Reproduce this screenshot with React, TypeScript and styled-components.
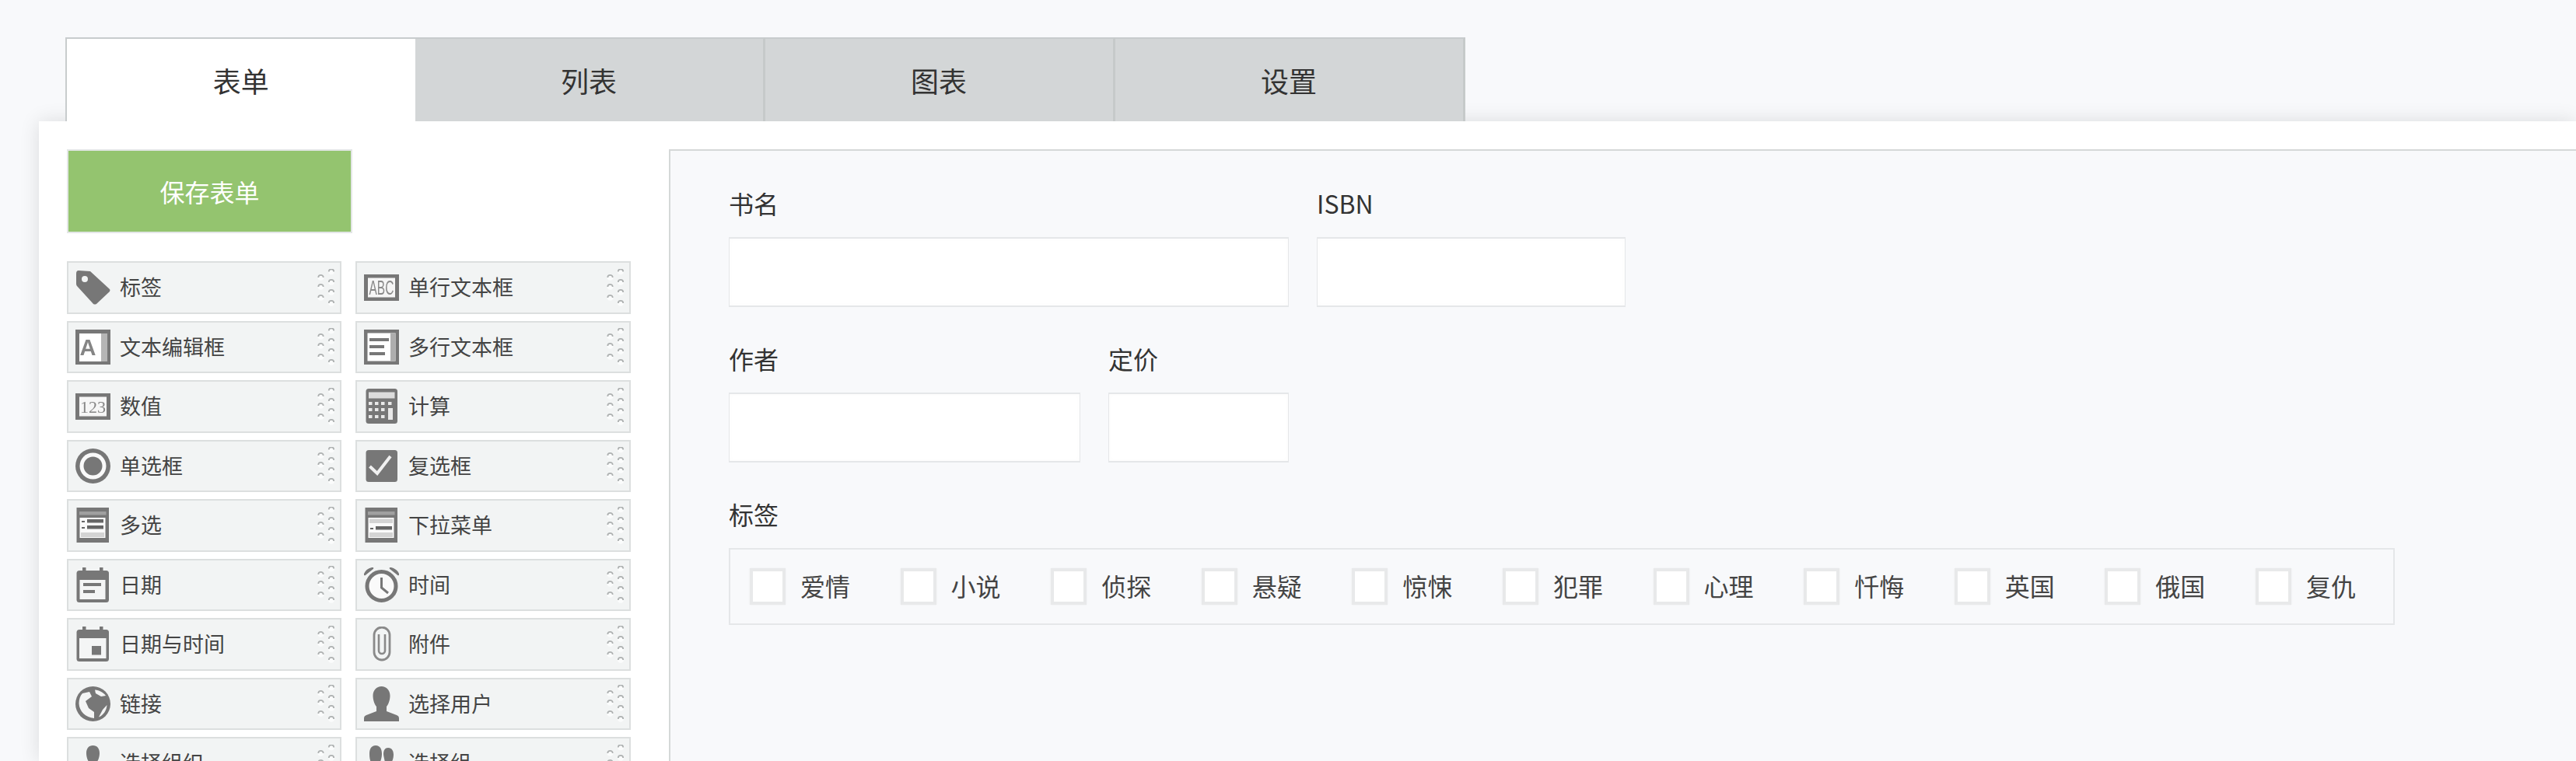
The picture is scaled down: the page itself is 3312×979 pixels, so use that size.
import React from 'react';
import styled, { createGlobalStyle } from 'styled-components';

const Global = createGlobalStyle`
  html, body { margin: 0; padding: 0; background: #f8f9fb; overflow: hidden; }
  body { font-family: "Noto Sans CJK SC", "Noto Sans", sans-serif; color: #333; }
  * { box-sizing: border-box; }
`;

const Page = styled.div`
  width: 3312px;
  height: 979px;
  overflow: hidden;
  padding-top: 48px;
  display: flex;
  flex-direction: column;
`;

const TabBar = styled.div`
  position: relative;
  z-index: 1;
  display: flex;
  margin-left: 84px;
  height: 108px;
  flex: none;
`;

const Tab = styled.div<{ $active?: boolean }>`
  width: ${p => (p.$active ? '449.5px' : '450px')};
  height: 108px;
  display: flex;
  align-items: center;
  justify-content: center;
  font-size: 36px;
  color: #333;
  background: ${p => (p.$active ? '#ffffff' : '#d3d6d7')};
  border-top: 2px solid #c8cccd;
  border-left: ${p => (p.$active ? '2px solid #c8cccd' : 'none')};
  border-right: ${p => (p.$active ? 'none' : '3px solid #c6caca')};
`;

const Panel = styled.div`
  position: relative;
  flex: 1;
  margin-left: 50px;
  background: #fff;
  box-shadow: 0 0 24px rgba(0, 0, 0, 0.12);
  padding: 36px 0 0 36px;
  display: flex;
  gap: 49px;
  min-height: 0;
`;

const Sidebar = styled.div`
  width: 725px;
  flex: none;
`;

const SaveButton = styled.button`
  display: block;
  width: 367px;
  height: 108px;
  border: 2px solid #e3e6e6;
  background: #94c46f;
  color: #fff;
  font-family: inherit;
  font-size: 32px;
  padding: 0;
  margin-bottom: 36px;
`;

const Palette = styled.div`
  display: grid;
  grid-template-columns: 353px 354px;
  column-gap: 18px;
  row-gap: 9px;
  grid-auto-rows: 67.5px;
`;

const Item = styled.div`
  display: flex;
  align-items: center;
  background: #f2f4f4;
  border: 2px solid #dcdfdf;
  padding: 0 3px 0 9px;
  font-size: 27px;
  color: #444;
`;

const IconSvg = styled.svg`
  width: 45px;
  height: 45px;
  flex: none;
  filter: blur(0.45px);
`;

const ItemLabel = styled.span`
  margin-left: 12px;
  padding-bottom: 2px;
  flex: 1;
  white-space: nowrap;
  line-height: 1;
`;

const GripSvg = styled.svg`
  width: 26px;
  height: 48px;
  flex: none;
`;

const Grip = () => {
  const dots: [number, number][] = [
    [18, 3.5], [18, 17], [18, 30], [18, 44],
    [4.5, 11], [4.5, 23], [4.5, 37],
  ];
  return (
    <GripSvg viewBox="0 0 26 48">
      {dots.map(([x, y]) => (
        <g key={`${x}-${y}`}>
          <circle cx={x} cy={y} r={3.8} fill="#fbfcfc" />
          <path d={`M${x - 3.2} ${y} A3.2 3.2 0 0 1 ${x + 3.2} ${y}`} fill="none" stroke="#aeb1b1" strokeWidth={1.8} />
        </g>
      ))}
    </GripSvg>
  );
};

const G = '#777';
const L = '#f4f5f5';

const icons: Record<string, React.ReactNode> = {
  tag: (
    <path fillRule="evenodd" fill={G} d="M4 1 L19 2 L44 25 Q45 26 44 28 L27 44 Q25 45 23 44 L2 21 Q1 20 1 18 L1 5 Q1 1 4 1 Z M12 8 A4 4 0 1 0 12 16 A4 4 0 1 0 12 8 Z" />
  ),
  abc: (
    <>
      <rect x="0" y="6" width="45" height="34" fill={G} />
      <rect x="5" y="10.5" width="35" height="25" fill="#f6f6f6" />
      <text transform="translate(6.5 32) scale(0.62 1)" fontFamily="Liberation Sans, sans-serif" fontSize="25" fill="#8a8a8a">ABC</text>
    </>
  ),
  richtext: (
    <>
      <rect x="0" y="0" width="45" height="45" fill={G} />
      <rect x="5" y="5" width="36" height="36" fill="#fff" />
      <rect x="33" y="5" width="8" height="36" fill="#b5b5b5" />
      <text x="5.5" y="33" fontFamily="Liberation Sans, sans-serif" fontWeight="700" fontSize="29" fill="#858585">A</text>
    </>
  ),
  multitext: (
    <>
      <rect x="0" y="0" width="45" height="45" fill={G} />
      <rect x="4.5" y="4.5" width="36" height="36" fill="#fff" />
      <rect x="34" y="4.5" width="6.5" height="36" fill="#adadad" />
      <rect x="7" y="11" width="25" height="4" fill={G} />
      <rect x="7" y="20" width="19" height="4" fill={G} />
      <rect x="7" y="29" width="20" height="4" fill={G} />
    </>
  ),
  num: (
    <>
      <rect x="0" y="6" width="45" height="34" fill={G} />
      <rect x="5" y="10.5" width="35" height="25" fill="#f6f6f6" />
      <text x="6" y="30.5" fontFamily="Liberation Serif, serif" fontSize="22" fill="#868686">123</text>
    </>
  ),
  calc: (
    <>
      <rect x="2.5" y="0" width="40.5" height="45" rx="3.5" fill={G} />
      <rect x="6" y="4.5" width="33.5" height="8" fill="#dcdcdc" />
      {[17, 25, 34].flatMap(y =>
        [6, 14, 22].map(x => <rect key={`${x}-${y}`} x={x} y={y} width="4.5" height="4" fill="#e8e8e8" />),
      )}
      <rect x="31" y="17" width="4.5" height="4" fill="#e8e8e8" />
      <rect x="31" y="25" width="6" height="15" fill="#e8e8e8" />
    </>
  ),
  radio: (
    <>
      <circle cx="22.5" cy="22.5" r="22.5" fill={G} />
      <circle cx="22.5" cy="22.5" r="17" fill="#fafafa" />
      <circle cx="22.5" cy="22.5" r="12" fill={G} />
    </>
  ),
  check: (
    <>
      <rect x="2.5" y="2" width="40.5" height="41" rx="3.5" fill={G} />
      <path d="M7.5 23 L17 32 L34 10" fill="none" stroke="#f0f0f0" strokeWidth="4" />
    </>
  ),
  multi: (
    <>
      <rect x="1.5" y="0" width="41.5" height="45" fill={G} />
      <rect x="5" y="5" width="34.5" height="4.5" fill="#a0a0a0" />
      <rect x="5.5" y="13" width="33" height="26" fill="#fafafa" />
      <rect x="15" y="15" width="21" height="4.5" fill="#666" />
      <rect x="15" y="23" width="21" height="4.5" fill="#666" />
      <rect x="8" y="17" width="4" height="2" fill="#666" />
      <rect x="8" y="25" width="4" height="2" fill="#666" />
      <rect x="7" y="32" width="30" height="6" fill="#d4d4d4" />
    </>
  ),
  select: (
    <>
      <rect x="1.5" y="0" width="41.5" height="45" fill={G} />
      <rect x="5" y="5" width="34.5" height="4.5" fill="#a0a0a0" />
      <rect x="5.5" y="13" width="33" height="26" fill="#fafafa" />
      <rect x="7" y="14.5" width="30" height="5.5" fill="#d4d4d4" />
      <rect x="15" y="24" width="21" height="4.5" fill="#666" />
      <rect x="8" y="26" width="4" height="2" fill="#666" />
      <rect x="7" y="32" width="30" height="6" fill="#d4d4d4" />
    </>
  ),
  date: (
    <>
      <rect x="9" y="0" width="4.5" height="8" fill={G} />
      <rect x="31" y="0" width="4.5" height="8" fill={G} />
      <rect x="1.5" y="4" width="41.5" height="41" rx="3.5" fill={G} />
      <rect x="5.5" y="16" width="33" height="25" fill={L} />
      <rect x="10" y="20" width="23" height="4" fill={G} />
      <rect x="10" y="29" width="15" height="4" fill={G} />
    </>
  ),
  datetime: (
    <>
      <rect x="9" y="0" width="4.5" height="8" fill={G} />
      <rect x="31" y="0" width="4.5" height="8" fill={G} />
      <rect x="1.5" y="4" width="41.5" height="41" rx="3.5" fill={G} />
      <rect x="5" y="15" width="34.5" height="26" fill={L} />
      <rect x="21" y="25" width="12" height="11.5" fill={G} />
    </>
  ),
  clock: (
    <>
      <circle cx="22.5" cy="24" r="18.5" fill="#fafafa" stroke={G} strokeWidth="5" />
      <path d="M1 9 Q3 3 11 1 Z M44 9 Q42 3 34 1 Z" fill={G} stroke={G} strokeWidth="2.5" strokeLinejoin="round" />
      <path d="M22.5 13 V26 L31 33" fill="none" stroke={G} strokeWidth="3" />
    </>
  ),
  clip: (
    <>
      <path d="M33 33 A10 10 0 0 1 13 33 V11 A10 10 0 0 1 33 11 V33" fill="none" stroke="#8a8a8a" strokeWidth="2.8" />
      <path d="M19 10 V31 A4 4 0 0 0 27 31 V10" fill="none" stroke="#8a8a8a" strokeWidth="2.6" />
    </>
  ),
  globe: (
    <>
      <circle cx="22.5" cy="22.5" r="22.5" fill={G} />
      <path d="M9 9 L18 7 L21 13 L13 19 L17 28 L24 33 L24 41 C13 40 5 32 4.5 22 C4.5 17 6 12 9 9 Z" fill={L} />
      <path d="M25 4.5 C31 5 36 8 39 12 L33 13 L26 9 Z" fill={L} />
      <path d="M40.5 24 C40 31 36 37 30 39.5 L35 30 Z" fill={L} />
    </>
  ),
  user: (
    <path fill={G} d="M22.5 0 C29 0 33.5 5 33.5 12 C33.5 18 31 24 29 26 V32 L42 37 Q45 38 45 41 V45 H0 V41 Q0 38 3 37 L16 32 V26 C14 24 11.5 18 11.5 12 C11.5 5 16 0 22.5 0 Z" />
  ),
  org: (
    <path fill={G} d="M22.5 0 C28 0 31 4 31 10 C31 15 29 20 27 22 V28 L36 32 V45 H9 V32 L18 28 V22 C16 20 14 15 14 10 C14 4 17 0 22.5 0 Z" />
  ),
  group: (
    <>
      <path fill={G} d="M15 0 C21 0 23 5 23 11 C23 16 21 21 20 23 V29 L28 33 V45 H0 V33 L10 29 V23 C8 21 7 16 7 11 C7 5 9 0 15 0 Z" />
      <path fill={G} d="M31 3 C36 3 38 7 38 12 C38 17 36 21 35 23 V29 L44 33 V45 H31 V31 L27 27 C28 22 25 15 25 11 C25 6 27 3 31 3 Z" />
    </>
  ),
};

const palette: [string, string][] = [
  ['tag', '标签'], ['abc', '单行文本框'],
  ['richtext', '文本编辑框'], ['multitext', '多行文本框'],
  ['num', '数值'], ['calc', '计算'],
  ['radio', '单选框'], ['check', '复选框'],
  ['multi', '多选'], ['select', '下拉菜单'],
  ['date', '日期'], ['clock', '时间'],
  ['datetime', '日期与时间'], ['clip', '附件'],
  ['globe', '链接'], ['user', '选择用户'],
  ['org', '选择组织'], ['group', '选择组'],
];

const FormArea = styled.div`
  flex: 1;
  margin-right: -4px;
  background: #f8f9fb;
  border: 2px solid #d5d8d8;
  border-bottom: none;
  padding: 49px 0 0 75px;
  display: flex;
  flex-direction: column;
  gap: 48px;
  min-width: 0;
`;

const Row = styled.div`
  display: flex;
  gap: 36px;
`;

const Field = styled.div<{ $w?: number }>`
  width: ${p => (p.$w ? `${p.$w}px` : 'auto')};
  flex: none;
`;

const Label = styled.div`
  font-size: 32px;
  line-height: 36px;
  height: 42px;
  margin-bottom: 20px;
  color: #333;
`;

const TextInput = styled.input`
  display: block;
  width: 100%;
  height: 90px;
  background: #fff;
  border: 2px solid #e5e7e9;
  border-width: 2px 1.5px;
  box-shadow: inset 0 0 6px rgba(0, 0, 0, 0.02);
  outline: none;
`;

const TagBox = styled.div`
  display: flex;
  align-items: center;
  width: 2142px;
  height: 99px;
  border: 2px solid #e5e7e9;
  padding-left: 25px;
`;

const TagItem = styled.label`
  width: 193.6px;
  flex: none;
  display: flex;
  align-items: center;
  gap: 19px;
  font-size: 32px;
  color: #444;
`;

const TagText = styled.span`
  padding-bottom: 3px;
`;

const TagCheck = styled.span`
  width: 46px;
  height: 47px;
  flex: none;
  background: #fff;
  border: 4px solid #e8e9ea;
  box-shadow: 0 0 2px rgba(0, 0, 0, 0.06);
`;

const tags = ['爱情', '小说', '侦探', '悬疑', '惊悚', '犯罪', '心理', '忏悔', '英国', '俄国', '复仇'];

export default function App() {
  return (
    <Page>
      <Global />
      <TabBar>
        <Tab $active>表单</Tab>
        <Tab>列表</Tab>
        <Tab>图表</Tab>
        <Tab>设置</Tab>
      </TabBar>
      <Panel>
        <Sidebar>
          <SaveButton>保存表单</SaveButton>
          <Palette>
            {palette.map(([icon, name]) => (
              <Item key={name}>
                <IconSvg viewBox="0 0 45 45">{icons[icon]}</IconSvg>
                <ItemLabel>{name}</ItemLabel>
                <Grip />
              </Item>
            ))}
          </Palette>
        </Sidebar>
        <FormArea>
          <Row>
            <Field $w={720}>
              <Label>书名</Label>
              <TextInput />
            </Field>
            <Field $w={397}>
              <Label>ISBN</Label>
              <TextInput />
            </Field>
          </Row>
          <Row>
            <Field $w={452}>
              <Label>作者</Label>
              <TextInput />
            </Field>
            <Field $w={232}>
              <Label>定价</Label>
              <TextInput />
            </Field>
          </Row>
          <Field>
            <Label>标签</Label>
            <TagBox>
              {tags.map(t => (
                <TagItem key={t}>
                  <TagCheck />
                  <TagText>{t}</TagText>
                </TagItem>
              ))}
            </TagBox>
          </Field>
        </FormArea>
      </Panel>
    </Page>
  );
}
